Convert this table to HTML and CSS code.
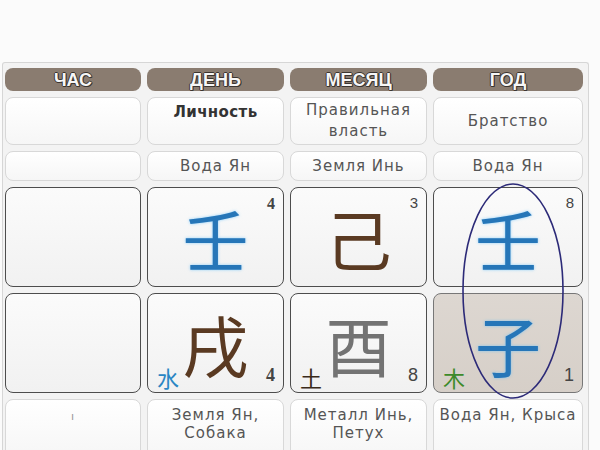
FILE: index.html
```html
<!DOCTYPE html>
<html lang="ru">
<head>
<meta charset="utf-8">
<link rel="stylesheet" href="styles.css">
</head>
<body>
<div class="frame">
  <div class="chart">
    <div class="head">ЧАС</div>
    <div class="head">ДЕНЬ</div>
    <div class="head">МЕСЯЦ</div>
    <div class="head">ГОД</div>

    <div class="cell"></div>
    <div class="cell bold">Личность</div>
    <div class="cell">Правильная<br>власть</div>
    <div class="cell">Братство</div>

    <div class="cell"></div>
    <div class="cell">Вода Ян</div>
    <div class="cell">Земля Инь</div>
    <div class="cell">Вода Ян</div>

    <div class="big"></div>
    <div class="big"><span class="glyph blue">壬</span><span class="num serif">4</span></div>
    <div class="big"><span class="glyph brown">己</span><span class="num">3</span></div>
    <div class="big"><span class="glyph blue">壬</span><span class="num">8</span></div>

    <div class="big"></div>
    <div class="big"><span class="glyph brown">戌</span><span class="el water">水</span><span class="num low serif">4</span></div>
    <div class="big"><span class="glyph gray">酉</span><span class="el earth">土</span><span class="num low">8</span></div>
    <div class="big shaded"><span class="glyph blue">子</span><span class="el wood">木</span><span class="num low">1</span></div>

    <div class="cell top"><span class="tick">ı</span></div>
    <div class="cell top">Земля Ян,<br>Собака</div>
    <div class="cell top">Металл Инь,<br>Петух</div>
    <div class="cell top">Вода Ян, Крыса</div>
  </div>
  <svg class="oval" width="106" height="220" viewBox="0 0 106 220"><ellipse cx="53" cy="110" rx="50" ry="107" fill="none" stroke="#2c2a78" stroke-width="1.6"/></svg>
</div>
</body>
</html>
```
FILE: styles.css
```css
html, body {
  margin: 0;
  padding: 0;
  background: #fbfbfb;
  overflow: hidden;
}
body {
  width: 600px;
  height: 450px;
  font-family: "DejaVu Sans", sans-serif;
}
.frame {
  position: relative;
  margin: 62px 0 0 2px;
  width: 583px;
  height: 400px;
  border: 1px solid #d6d6d6;
  border-bottom: none;
  border-radius: 3px 3px 0 0;
  background: #f3f3f3;
  padding: 5px 0 0 2px;
}
.chart {
  display: grid;
  grid-template-columns: 136px 137px 137px 150px;
  grid-template-rows: 23px 48px 30px 100px 100px 60px;
  column-gap: 6px;
  row-gap: 6px;
}
.head {
  background: #8a7c70;
  border-radius: 8px;
  color: #f6f6f6;
  font-family: "Liberation Sans", sans-serif;
  font-weight: bold;
  font-size: 18px;
  line-height: 24px;
  text-align: center;
  text-shadow: -1px 0 #3b3530, 1px 0 #3b3530, 0 -1px #3b3530, 0 1px #3b3530, 1px 1px #3b3530;
}
.cell {
  box-sizing: border-box;
  border: 1px solid #d8d8d8;
  border-radius: 8px;
  background: linear-gradient(#ffffff, #f6f6f6);
  display: flex;
  align-items: center;
  justify-content: center;
  text-align: center;
  font-size: 15px;
  letter-spacing: 1px;
  line-height: 21px;
  color: #555;
}
.cell.bold {
  font-weight: bold;
  color: #333;
  align-items: flex-start;
  padding-top: 4px;
  letter-spacing: 0.4px;
}
.cell.top {
  align-items: flex-start;
  padding-top: 6px;
  line-height: 18px;
}
.tick {
  color: #999;
  font-size: 11px;
  margin-top: 2px;
}
.big {
  position: relative;
  box-sizing: border-box;
  border: 1px solid #4d4d4d;
  border-radius: 8px;
  background: linear-gradient(#fbfbfb, #f1f1f1);
  display: flex;
  align-items: center;
  justify-content: center;
}
.big.shaded {
  background: linear-gradient(#ddd7d1, #d6cfc8);
  border-color: #777;
}
.glyph {
  font-family: "Noto Sans CJK SC", sans-serif;
  font-size: 66px;
  line-height: 1;
}
.blue {
  color: #2676b8;
  text-shadow: 0 0 3px rgba(90, 190, 255, 0.7);
}
.brown {
  color: #5a3a22;
}
.gray {
  color: #737373;
}
.num {
  position: absolute;
  top: 7px;
  right: 8px;
  font-family: "Liberation Sans", sans-serif;
  font-size: 15px;
  color: #444;
  line-height: 1;
}
.num.serif {
  font-family: "Liberation Serif", serif;
  font-weight: bold;
  font-size: 16px;
  top: 8px;
}
.num.low {
  top: auto;
  bottom: 8px;
  font-size: 18px;
}
.el {
  position: absolute;
  left: 9px;
  bottom: 4px;
  font-family: "Noto Sans CJK SC", sans-serif;
  font-size: 22px;
  line-height: 1;
}
.water { color: #2a86c4; }
.earth { color: #3a2a1a; }
.wood { color: #3d8a2a; }
.oval {
  position: absolute;
  left: 457px;
  top: 118px;
}
```
